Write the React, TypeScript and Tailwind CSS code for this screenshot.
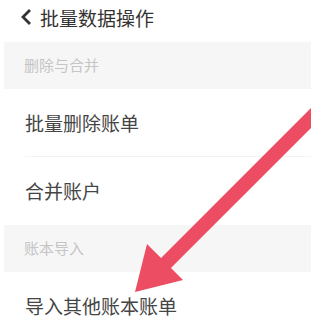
import React from 'react';

const font = { fontFamily: '"Noto Sans CJK SC", "Noto Sans", sans-serif' };

const Section = ({ title }: { title: string }) => (
  <div className="ml-[4px] h-[47px] bg-[#f6f6f7] flex items-center pl-[20px] text-[15px] text-[#c5c5c5]">
    {title}
  </div>
);

const Row = ({ label, divider }: { label: string; divider?: boolean }) => (
  <div className="h-[68px] flex items-center pl-[25px] relative">
    <span className="text-[19px] text-[#454545]">{label}</span>
    {divider && <div className="absolute left-[25px] right-0 bottom-0 h-px bg-[#f3f3f3]" />}
  </div>
);

export default function App() {
  return (
    <div className="relative w-[311px] h-[333px] bg-white overflow-hidden" style={font}>
      <div className="h-[42px] flex items-center pl-[18px] gap-[6px] pb-[8px]">
        <svg width="16" height="16" viewBox="0 0 16 16">
          <path d="M11 2 L5 8 L11 14" fill="none" stroke="#333" strokeWidth="2.8" strokeLinecap="square" />
        </svg>
        <span className="text-[19px] text-[#333] leading-none">批量数据操作</span>
      </div>
      <Section title="删除与合并" />
      <Row label="批量删除账单" divider />
      <Row label="合并账户" />
      <Section title="账本导入" />
      <Row label="导入其他账本账单" />

      <svg className="absolute inset-0 pointer-events-none" width="311" height="333" viewBox="0 0 311 333">
        <line x1="162" y1="267" x2="330" y2="99" stroke="#ec4d63" strokeWidth="14" />
        <polygon points="135,292 147,244 183,280" fill="#ec4d63" />
      </svg>
    </div>
  );
}
